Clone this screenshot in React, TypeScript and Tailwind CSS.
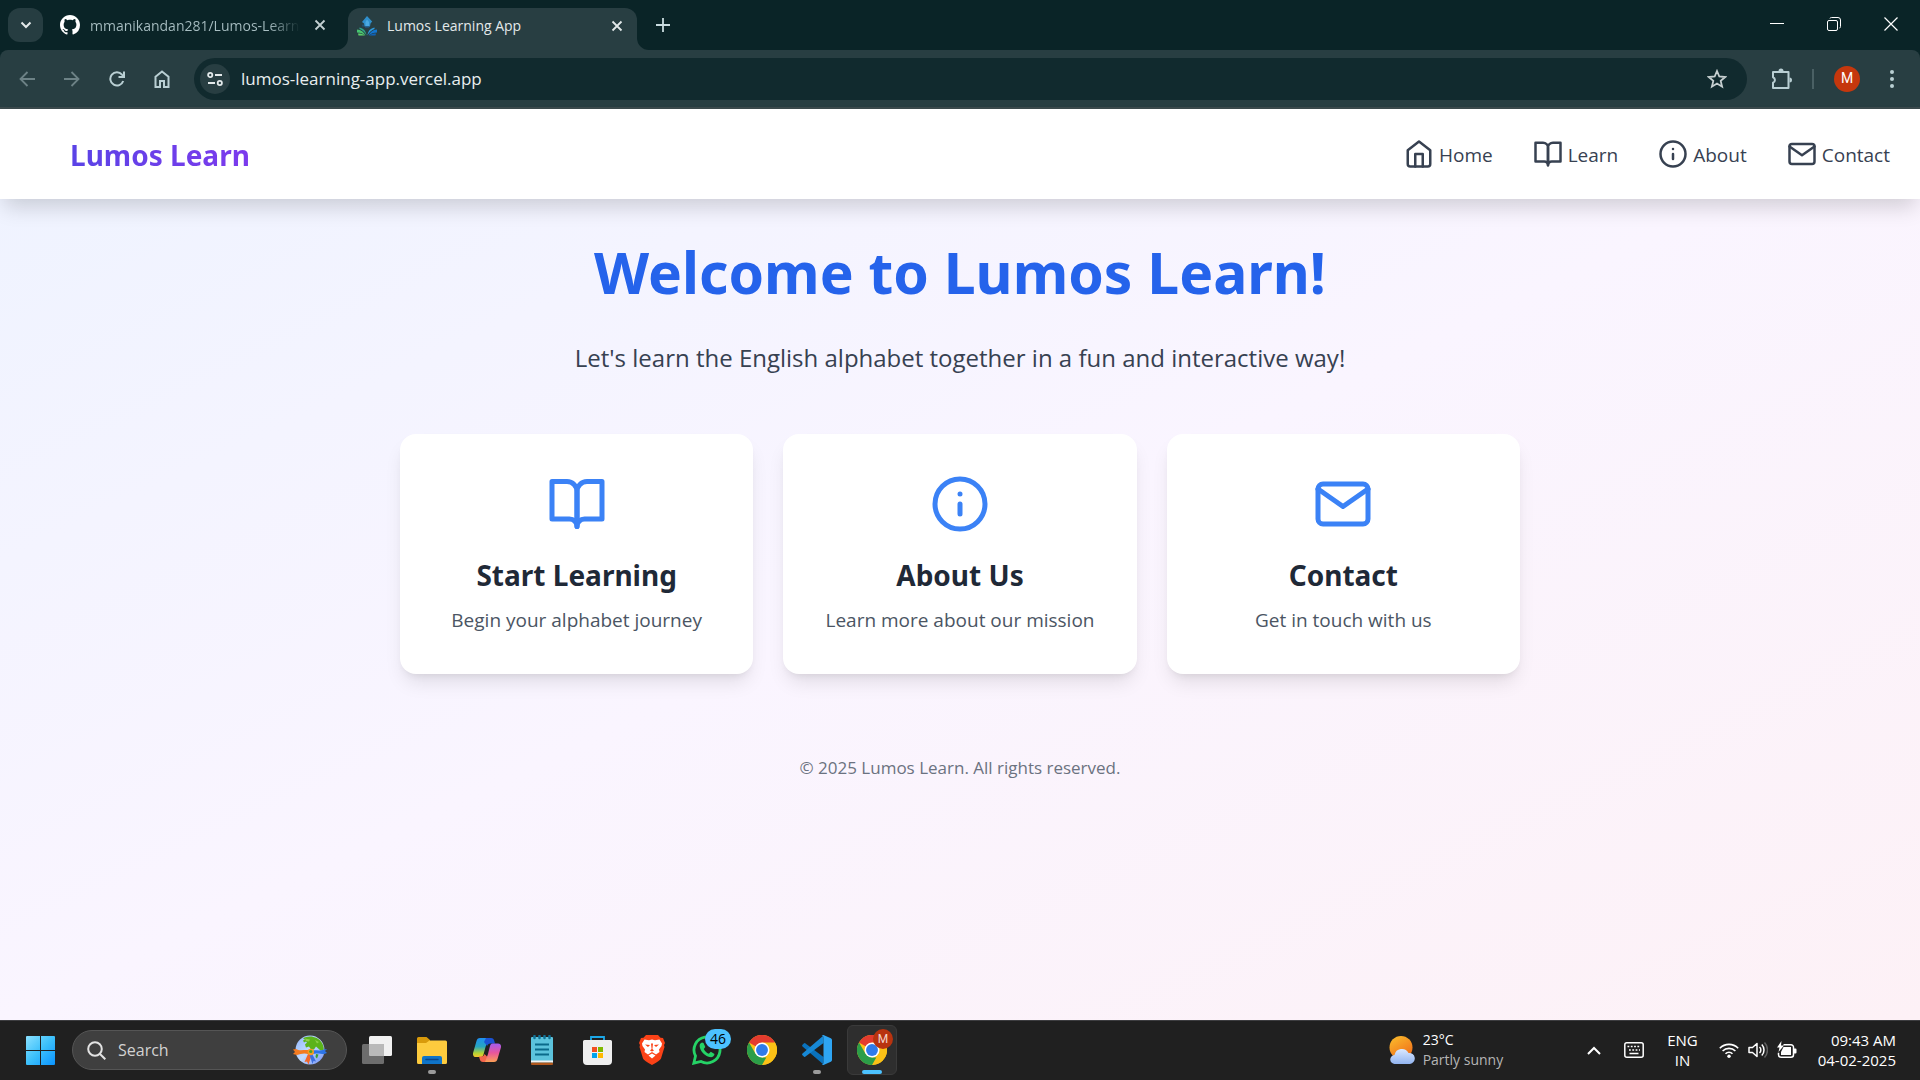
import { FiBookOpen, FiHome, FiInfo, FiMail } from "react-icons/fi";
import type { ReactNode } from "react";
import type { IconType } from "react-icons";

/* ---------- browser frame ---------- */

function CloseGlyph() {
  return (
    <svg viewBox="0 0 12 12" className="size-3" fill="none" stroke="currentColor" strokeWidth="1.8">
      <path d="M1.5 1.5 10.5 10.5M10.5 1.5 1.5 10.5" />
    </svg>
  );
}

function GithubMark() {
  return (
    <svg viewBox="0 0 16 16" className="size-5 shrink-0" fill="#fff">
      <path d="M8 0C3.58 0 0 3.58 0 8c0 3.54 2.29 6.53 5.47 7.59.4.07.55-.17.55-.38 0-.19-.01-.82-.01-1.49-2.01.37-2.53-.49-2.69-.94-.09-.23-.48-.94-.82-1.13-.28-.15-.68-.52-.01-.53.63-.01 1.08.58 1.23.82.72 1.21 1.87.87 2.33.66.07-.52.28-.87.51-1.07-1.78-.2-3.64-.89-3.64-3.95 0-.87.31-1.59.82-2.15-.08-.2-.36-1.02.08-2.12 0 0 .67-.21 2.2.82.64-.18 1.32-.27 2-.27s1.36.09 2 .27c1.53-1.04 2.2-.82 2.2-.82.44 1.1.16 1.92.08 2.12.51.56.82 1.27.82 2.15 0 3.07-1.87 3.75-3.65 3.95.29.25.54.73.54 1.48 0 1.07-.01 1.93-.01 2.2 0 .21.15.46.55.38A8.01 8.01 0 0 0 16 8c0-4.42-3.58-8-8-8" />
    </svg>
  );
}

function LumosMark() {
  return (
    <svg viewBox="0 0 20 20" className="size-5 shrink-0">
      <path d="M10 0 15.200 5.500 13.500 7.500 13 10.500H7.500L7 7.500 5 6z" fill="#2f8fcb" />
      <path d="M10 3.500 12 6v4H8.500V6z" fill="#4aa9e0" />
      <path d="M6 8.500v2M8 11h4" stroke="#1f5f98" strokeWidth="1" />
      <path d="M2.500 11.500c4 .8 6.500 3.500 7 8-1.500-3-4-5.500-7-6.500z" fill="#2fa58a" />
      <path d="M0 13.500c4 .3 7 2.500 8.500 6C6 17.500 3.500 16.500 0 16.500z" fill="#47c46f" />
      <path d="M1 17.500c3 0 5 .5 7 2H1.500z" fill="#5ccd6a" />
      <path d="M17.500 11.500c-4 .8-6.500 3.500-7 8 1.500-3 4-5.500 7-6.500z" fill="#2f9be0" />
      <path d="M20 13.500c-4 .3-7 2.500-8.500 6 2.500-2 5-3 8.500-3z" fill="#1274cf" />
      <path d="M19 17.500c-3 0-5 .5-7 2h6.500z" fill="#0f62b8" />
    </svg>
  );
}

function TabStrip() {
  return (
    <div className="flex h-[50px] items-start bg-[#0a2427] text-[#c3d0d2]">
      <button aria-label="Search tabs" className="mt-2 ml-2 flex h-[34px] w-[35px] items-center justify-center rounded-xl bg-[#263d41] text-[#e3e9ea]">
        <svg viewBox="0 0 12 8" className="h-2 w-3" fill="none" stroke="currentColor" strokeWidth="2">
          <path d="m1.5 1.5 4.500 4.500 4.500-4.500" />
        </svg>
      </button>
      <div className="flex h-[50px] w-[297px] items-center pl-[17px]">
        <GithubMark />
        <span className="ml-[10px] w-[210px] bg-gradient-to-r from-[#a9bfc3] from-85% to-transparent bg-clip-text text-[14px] whitespace-nowrap text-transparent">
          mmanikandan281/Lumos-Learn
        </span>
        <button aria-label="Close tab" className="ml-[14px] text-[#c3d0d2]">
          <CloseGlyph />
        </button>
      </div>
      <div className="relative mt-2 ml-2 flex h-[42px] w-[289px] items-center rounded-t-xl bg-[#283e42] pr-[14px] pb-[7px] pl-[9px] text-[#e3e9ea]">
        <svg viewBox="0 0 12 12" className="absolute bottom-0 -left-3 size-3" fill="#283e42">
          <path d="M12 0v12H0A12 12 0 0 0 12 0" />
        </svg>
        <svg viewBox="0 0 12 12" className="absolute -right-3 bottom-0 size-3" fill="#283e42">
          <path d="M0 0v12h12A12 12 0 0 1 0 0" />
        </svg>
        <LumosMark />
        <span className="ml-[10px] grow text-[14px] whitespace-nowrap">Lumos Learning App</span>
        <button aria-label="Close tab">
          <CloseGlyph />
        </button>
      </div>
      <button aria-label="New tab" className="mt-[18px] ml-[19px]">
        <svg viewBox="0 0 14 14" className="size-[14px]" fill="none" stroke="#c9dcdf" strokeWidth="1.8">
          <path d="M7 0v14M0 7h14" />
        </svg>
      </button>
      <div className="ml-auto flex items-center gap-[43px] pt-[17px] pr-[22px] text-white">
        <button aria-label="Minimize">
          <svg viewBox="0 0 14 14" className="size-[14px]" stroke="currentColor" strokeWidth="1">
            <path d="M0 6.500h14" />
          </svg>
        </button>
        <button aria-label="Restore">
          <svg viewBox="0 0 14 14" className="size-[14px]" fill="none" stroke="currentColor" strokeWidth="1">
            <rect x=".5" y="3.500" width="10" height="10" rx="1.500" />
            <path d="M3 1.500C3 .9 3.500.5 4.500.5H11A2.500 2.500 0 0 1 13.500 3v6.500c0 1-.5 1.500-1 1.500" />
          </svg>
        </button>
        <button aria-label="Close">
          <svg viewBox="0 0 14 14" className="size-[14px]" stroke="currentColor" strokeWidth="1.200">
            <path d="M.5.5 13.500 13.500M13.500.5.5 13.500" />
          </svg>
        </button>
      </div>
    </div>
  );
}

function Toolbar() {
  return (
    <div className="bg-[#0a2427]">
      <div className="flex h-[59px] items-center rounded-t-lg border-b-2 border-[#3c4a4d] bg-[#283e42] pr-[26px] pl-[19px] text-[#b9cfd3]">
        <button aria-label="Back" className="text-[#6d8286]">
          <svg viewBox="0 0 16 16" className="size-4" fill="none" stroke="currentColor" strokeWidth="1.800">
            <path d="M16 8H2M8.500 1 1.500 8l7 7" />
          </svg>
        </button>
        <button aria-label="Forward" className="ml-[29px] text-[#6d8286]">
          <svg viewBox="0 0 16 16" className="size-4" fill="none" stroke="currentColor" strokeWidth="1.800">
            <path d="M0 8h14M7.500 1l7 7-7 7" />
          </svg>
        </button>
        <button aria-label="Reload" className="ml-[29px]">
          <svg viewBox="0 0 16 16" className="size-4" fill="none" stroke="currentColor" strokeWidth="2">
            <path d="M14.200 10A6.600 6.600 0 1 1 13 3.700L15 5.800M15 .5V6H9.500" />
          </svg>
        </button>
        <button aria-label="Home page" className="ml-[29px]">
          <svg viewBox="0 0 16 18" className="h-[18px] w-4" fill="none" stroke="currentColor" strokeWidth="2">
            <path d="M1.500 6.800 8 1.500l6.500 5.300V17H10v-6H6v6H1.500z" />
          </svg>
        </button>
        <div className="ml-6 flex h-[42px] grow items-center rounded-full bg-[#112a2e] pr-5 pl-[6px]">
          <span className="flex size-[30px] shrink-0 items-center justify-center rounded-full bg-[#283e42] text-[#e3e9ea]">
            <svg viewBox="0 0 16 14" className="h-[14px] w-4" fill="none" stroke="currentColor" strokeWidth="1.800">
              <circle cx="3.200" cy="3" r="2.100" />
              <path d="M8 3h7M1 11h7" />
              <circle cx="12.800" cy="11" r="2.100" />
            </svg>
          </span>
          <input
            aria-label="Address"
            defaultValue="lumos-learning-app.vercel.app"
            className="ml-[11px] h-8 grow bg-transparent text-[17px] text-[#e8eeef] outline-none"
          />
          <button aria-label="Bookmark this page" className="text-[#c6cfd0]">
            <svg viewBox="0 0 20 20" className="size-5" fill="none" stroke="currentColor" strokeWidth="1.800">
              <path d="m10 2 2.300 5.500 5.900.5-4.500 3.900 1.400 5.800L10 14.600l-5.100 3.100 1.400-5.800L1.800 8l5.900-.5z" />
            </svg>
          </button>
        </div>
        <button aria-label="Extensions" className="ml-6">
          <svg viewBox="0 0 22 22" className="size-[22px]" fill="none" stroke="currentColor" strokeWidth="2" strokeLinejoin="round">
            <path d="M2 4h15.500v16H2v-5.200a3 3 0 0 0 0-5.600z" />
            <path d="M7.500 3a2.500 2.500 0 0 1 5 0zM18.500 9.500a2.500 2.500 0 0 1 0 5z" fill="currentColor" stroke="none" />
          </svg>
        </button>
        <span className="ml-[19px] h-5 w-[2px] bg-[#4a6064]" />
        <button aria-label="Profile" className="ml-5 flex size-[26px] items-center justify-center rounded-full bg-[#c5370d] font-['Roboto',sans-serif] text-[14px] text-white">
          M
        </button>
        <button aria-label="Menu" className="ml-[30px]">
          <svg viewBox="0 0 4 18" className="h-[18px] w-1" fill="currentColor">
            <circle cx="2" cy="2" r="2" />
            <circle cx="2" cy="9" r="2" />
            <circle cx="2" cy="16" r="2" />
          </svg>
        </button>
      </div>
    </div>
  );
}

/* ---------- site ---------- */

const navItems: { label: string; icon: IconType }[] = [
  { label: "Home", icon: FiHome },
  { label: "Learn", icon: FiBookOpen },
  { label: "About", icon: FiInfo },
  { label: "Contact", icon: FiMail },
];

const cards: { title: string; text: string; icon: IconType }[] = [
  { title: "Start Learning", text: "Begin your alphabet journey", icon: FiBookOpen },
  { title: "About Us", text: "Learn more about our mission", icon: FiInfo },
  { title: "Contact", text: "Get in touch with us", icon: FiMail },
];

function Site() {
  return (
    <div className="flex grow flex-col bg-gradient-to-br from-[#eef3ff] via-[#faf5ff] to-[#fdf1f6]">
      <header className="flex h-[90px] items-center justify-between bg-white pt-[2px] pr-[30px] pl-[70px] shadow-[0_12px_20px_-4px_rgb(0_0_0/0.16)]">
        <a href="#home" className="bg-gradient-to-r from-[#5a43e6] to-[#7c3aed] bg-clip-text font-['Noto_Sans',sans-serif] text-[28px] leading-10 font-bold text-transparent">
          Lumos Learn
        </a>
        <nav className="flex items-center gap-10">
          {navItems.map(({ label, icon: Icon }) => (
            <a key={label} href={"#" + label.toLowerCase()} className="flex items-center gap-[5px] text-[19px] text-[#374151]">
              <Icon className="mb-[2px] size-[30px]" />
              {label}
            </a>
          ))}
        </nav>
      </header>
      <main className="mx-auto w-full max-w-[1120px] pt-[38px] text-center">
        <h1 className="font-['Noto_Sans',sans-serif] text-[57px] leading-[70px] font-bold text-[#2563eb]">Welcome to Lumos Learn!</h1>
        <p className="mt-[33px] text-[24px] leading-[35px] text-[#374151]">
          Let's learn the English alphabet together in a fun and interactive way!
        </p>
        <div className="mt-[59px] grid grid-cols-3 gap-[30px]">
          {cards.map(({ title, text, icon: Icon }) => (
            <a
              key={title}
              href={"#" + title.toLowerCase().replace(" ", "-")}
              className="flex flex-col items-center rounded-2xl bg-white px-10 pt-10 pb-[39px] shadow-[0_12px_19px_-4px_rgb(0_0_0/0.1),0_5px_8px_-5px_rgb(0_0_0/0.1)]"
            >
              <Icon className="size-[60px] text-[#3b82f6]" />
              <h2 className="mt-[21px] font-['Noto_Sans',sans-serif] text-[28px] leading-10 font-bold text-[#1f2937]">{title}</h2>
              <p className="mt-[10px] text-[19px] leading-[30px] text-[#4b5563]">{text}</p>
            </a>
          ))}
        </div>
      </main>
      <footer className="mt-[81px] text-center text-[17px] leading-[25px] text-[#6b7280]">
        © 2025 Lumos Learn. All rights reserved.
      </footer>
    </div>
  );
}

/* ---------- taskbar ---------- */

function ChromeLogo() {
  return (
    <svg viewBox="0 0 48 48" className="size-[30px]">
      <circle cx="24" cy="24" r="24" fill="#fbc116" />
      <path d="M24 24 3.200 12A24 24 0 0 1 44.800 12z" fill="#e33b2e" />
      <path d="M24 12h20.800A24 24 0 0 1 24 48l10.400-18z" fill="#fbc116" />
      <path d="M3.200 12 13.600 30 24 36h6.900L24 48A24 24 0 0 1 3.200 12" fill="#2b9e48" />
      <circle cx="24" cy="24" r="12" fill="#fff" />
      <circle cx="24" cy="24" r="9.500" fill="#2f7bea" />
    </svg>
  );
}

function WindowsLogo() {
  return (
    <svg viewBox="0 0 29 29" className="size-[29px]">
      <defs>
        <linearGradient id="win" x1="0" y1="0" x2="1" y2="1">
          <stop offset="0" stopColor="#8be1ff" />
          <stop offset=".5" stopColor="#3cc0fb" />
          <stop offset="1" stopColor="#0a93ff" />
        </linearGradient>
      </defs>
      <path d="M1 0h13v14H0V1a1 1 0 0 1 1-1M15 0h13a1 1 0 0 1 1 1v13H15zM0 15h14v14H1a1 1 0 0 1-1-1zM15 15h14v13a1 1 0 0 1-1 1H15z" fill="url(#win)" />
    </svg>
  );
}

function Globe() {
  return (
    <svg viewBox="0 0 34 30" className="h-[30px] w-[34px]">
      <defs>
        <linearGradient id="sea" x1="0" y1="0" x2="1" y2="1">
          <stop offset="0" stopColor="#8fb4fb" />
          <stop offset=".5" stopColor="#c3dcff" />
          <stop offset="1" stopColor="#6d8df5" />
        </linearGradient>
      </defs>
      <circle cx="17" cy="15" r="14.500" fill="url(#sea)" />
      <path d="M10 3.500C15 0 25 1 29 8c1.500 3 2 5 1.500 7l-3 .5-4.500-4-2 3h-3l-2-3-3 1-1-3 2-2-1-1-2 1-1-2 2-1z" fill="#5cb31b" />
      <path d="M12 3.500l5 1-1 2-3-.5zM22 5l4 2-2 1.500z" fill="#8fd04a" />
      <path d="M23 19l2.500.5-1.500 4-1.500-1.500z" fill="#3c9c2c" />
      <path d="M0 14.500 3 14c4 2.500 9 0 14 1.500l-1 4c-5-2-8-.5-12 .5L0 19l2-2z" fill="#f47b20" />
      <path d="m34 14-3 .5c-5 2-8 0-13 1l1 4c5-2 8-.5 12-.5l3-1-2-2z" fill="#2b74e8" />
      <path d="m15 19-3.500 8 2.500-.5 1.500 3L19 19z" fill="#f2672a" />
      <path d="m19 18.500 4 8-2.500-.5-1 3L16.500 20z" fill="#3c6fe0" />
      <circle cx="17.800" cy="17" r="3.200" fill="#f79a23" />
      <circle cx="17.800" cy="16.500" r="1.600" fill="#45a52c" />
    </svg>
  );
}

function TaskView() {
  return (
    <svg viewBox="0 0 30 28" className="h-7 w-[30px]">
      <rect x="7" y="0" width="23" height="20" rx="1.500" fill="#f1f1f1" />
      <rect x="0" y="8" width="22" height="20" rx="1.500" fill="#6d6d6d" />
      <path d="M7 8h14a1 1 0 0 1 1 1v11H8a1 1 0 0 1-1-1z" fill="#b9b9b9" />
    </svg>
  );
}

function Explorer() {
  return (
    <svg viewBox="0 0 30 27" className="h-[27px] w-[30px]">
      <path d="M0 1.500A1.500 1.500 0 0 1 1.500 0h8L13 3v5H0z" fill="#d99a0b" />
      <path d="M0 6h9l3.500-2.500H28.500A1.500 1.500 0 0 1 30 5v20.500a1.500 1.500 0 0 1-1.500 1.500h-27A1.500 1.500 0 0 1 0 25.500z" fill="#fdcb3e" />
      <path d="M5 27v-6a2 2 0 0 1 2-2h16a2 2 0 0 1 2 2v6z" fill="#0f74c8" />
      <path d="M9 22.500h12" stroke="#08458a" strokeWidth="1.500" strokeLinecap="round" />
    </svg>
  );
}

function Copilot() {
  return (
    <svg viewBox="0 0 28 26" className="h-[26px] w-7">
      <defs>
        <linearGradient id="copL" x1="0" y1="0" x2="0" y2="1">
          <stop offset="0" stopColor="#1f8ff0" />
          <stop offset=".45" stopColor="#27a5c0" />
          <stop offset=".8" stopColor="#b5d334" />
          <stop offset="1" stopColor="#f6c52d" />
        </linearGradient>
        <linearGradient id="copR" x1="0" y1="0" x2="0" y2="1">
          <stop offset="0" stopColor="#a35cf0" />
          <stop offset=".5" stopColor="#e8559c" />
          <stop offset="1" stopColor="#fb9f55" />
        </linearGradient>
      </defs>
      <path d="M7 1h9l-3.500 9-2 7.500C10 19 9.500 20 8 20H3C.5 20-.5 18 .2 15.500L3.500 4C4 2 5 1 7 1" fill="url(#copL)" />
      <path d="M13 1h5c2 0 2.800 1.300 3.300 3l.7 2.500h-4.500c-2 0-2.800 1-3.300 2.500L11 5z" fill="#1b52d4" />
      <path d="M15 25h-5c-2 0-2.800-1.300-3.300-3L6 19.500h2.500c2 0 2.500-1 3-2.500l3 3z" fill="#f2654c" />
      <path d="M21 25h-9l3-8 2-8c.5-1.500 1-2.500 2.500-2.500H25c2.500 0 3.500 2 2.800 4.500L24.500 22c-.5 2-1.500 3-3.500 3" fill="url(#copR)" />
    </svg>
  );
}

function Notepad() {
  return (
    <svg viewBox="0 0 22 30" className="h-[30px] w-[22px]">
      <rect x="0" y="2" width="22" height="26" rx="1" fill="#5cc3dc" />
      <rect x="0" y="25.500" width="22" height="2" fill="#f4f4f4" />
      <rect x="0" y="27.500" width="22" height="2.500" rx="1" fill="#b0571c" />
      <path d="M3.500 1v2M8.500 1v2M13.500 1v2M18.500 1v2" stroke="#107296" strokeWidth="2.500" strokeLinecap="round" />
      <path d="M4 9.500h14M4 14.500h14M4 19.500h14" stroke="#0a6a8a" strokeWidth="1.800" />
    </svg>
  );
}

function Store() {
  return (
    <svg viewBox="0 0 29 29" className="size-[29px]">
      <path d="M8 6V1h13v5" fill="none" stroke="#1ba8e8" strokeWidth="1.800" />
      <path d="M0 5.500A1.500 1.500 0 0 1 1.500 4h26A1.500 1.500 0 0 1 29 5.500V25a4 4 0 0 1-4 4H4a4 4 0 0 1-4-4z" fill="#efefef" />
      <path d="M9 11h5v5H9z" fill="#f25022" />
      <path d="M15 11h5v5h-5z" fill="#7fba00" />
      <path d="M9 17h5v5H9z" fill="#00a4ef" />
      <path d="M15 17h5v5h-5z" fill="#ffb900" />
    </svg>
  );
}

function Brave() {
  return (
    <svg viewBox="0 0 26 30" className="h-[30px] w-[26px]">
      <path d="m7 0-2.500 2.800L2 3 0 8l1 2-.5 2L4 23.500Q5 25.500 13 30q8-4.500 9-6.500L25.500 12l-.5-2 1-2-2-5-2.500-.2L19 0z" fill="#fb4217" />
      <path d="m5.500 4.500 4.500.8 3-.8 3 .8 4.500-.8L23 8.500l-.5 2.500-2.500 3.500.5 2.500-3.500 2.500L13 17l-4 2.500L5.500 17l.5-2.500L3.500 11 3 8.500z" fill="#fff" />
      <path d="m9.500 20.500 3.500-2 3.500 2-3.500 3z" fill="#fff" />
      <path d="M6 9.500l5 .5-2 2zM20 9.500l-5 .5 2 2zM12 8.500h2l-.6 5.500 1.600 1.500-2 1-2-1 1.600-1.500z" fill="#fb4217" />
    </svg>
  );
}

function Whatsapp() {
  return (
    <svg viewBox="0 0 30 30" className="size-[30px]">
      <path d="M1.800 28.200 3.500 21A13 13 0 1 1 9 26.500z" fill="none" stroke="#25d366" strokeWidth="2.800" />
      <path d="M10 7.500c-2 .5-3 2.500-2 5.500 1.500 4.500 5 7.800 9.500 9 2.800.6 4.800-.8 5-3l-3.700-2.300-2 2c-2.300-.8-4-2.500-5-4.700l1.500-2L11.500 8z" fill="#25d366" />
    </svg>
  );
}

function VsCode() {
  return (
    <svg viewBox="0 0 30 30" className="size-[30px]">
      <path d="M3.200 8.300 21.500 22v7.500L.5 11.500q-.8-1 0-1.800l1.300-1.300q.7-.6 1.400-.1" fill="#0a72bd" />
      <path d="M3.200 21.700 21.500 8V.5L.5 18.500q-.8 1 0 1.800l1.300 1.300q.7.600 1.400.1" fill="#1789d6" />
      <path d="m21.500 0 7.300 3.200a2 2 0 0 1 1.200 1.800v20a2 2 0 0 1-1.200 1.800L21.500 30q-1.500 0-1.800-1 1.800.8 1.800-1.500V2.500Q21.500.2 19.700 1q.3-1 1.800-1" fill="#2ea5f3" />
    </svg>
  );
}

function TaskButton({ label, active, running, children }: { label: string; active?: boolean; running?: boolean; children: ReactNode }) {
  return (
    <button
      aria-label={label}
      className={
        active
          ? "relative flex h-[50px] w-[50px] items-center justify-center rounded-md border border-[#3a3a3a] bg-[#2e2e2e]"
          : "relative flex h-[50px] w-[50px] items-center justify-center"
      }
    >
      {children}
      {running && <span className="absolute bottom-[1px] left-[21px] h-1 w-2 rounded-full bg-[#9b9b9b]" />}
      {active && <span className="absolute bottom-0 left-[14px] h-1 w-5 rounded-full bg-[#4cc2ff]" />}
    </button>
  );
}

function Taskbar() {
  return (
    <div className="flex h-[60px] items-center border-t border-[#3d3d40] bg-[#202020] pr-6 pb-[1px] pl-[26px] text-[14px] leading-5 text-white">
      <button aria-label="Start">
        <WindowsLogo />
      </button>
      <label className="ml-[17px] flex h-10 w-[275px] items-center rounded-full border border-[#555] bg-[#3f3f3f] pr-[19px] pl-[14px]">
        <svg viewBox="0 0 19 19" className="size-[19px] shrink-0" fill="none" stroke="#e3e3e3" strokeWidth="2">
          <circle cx="8" cy="8" r="6.800" />
          <path d="m13 13 5.300 5.300" />
        </svg>
        <input aria-label="Search" placeholder="Search" className="ml-3 w-0 grow bg-transparent text-[16px] outline-none placeholder:text-[#d2d2d2]" />
        <Globe />
      </label>
      <div className="ml-[5px] flex items-center gap-[5px]">
        <TaskButton label="Task view"><TaskView /></TaskButton>
        <TaskButton label="File Explorer" running><Explorer /></TaskButton>
        <TaskButton label="Copilot"><Copilot /></TaskButton>
        <TaskButton label="Notepad"><Notepad /></TaskButton>
        <TaskButton label="Store"><Store /></TaskButton>
        <TaskButton label="Brave"><Brave /></TaskButton>
        <TaskButton label="WhatsApp">
          <Whatsapp />
          <span className="absolute top-1 left-[23px] flex h-5 w-[26px] items-center justify-center rounded-full bg-[#4cc2ff] text-[14px] text-black">46</span>
        </TaskButton>
        <TaskButton label="Chrome"><ChromeLogo /></TaskButton>
        <TaskButton label="Visual Studio Code" running><VsCode /></TaskButton>
        <TaskButton label="Chrome, Lumos Learning App" active>
          <ChromeLogo />
          <span className="absolute top-[3px] right-[3px] flex size-5 items-center justify-center rounded-full bg-[#b8330f] font-['Roboto',sans-serif] text-[12px] text-[#f3d5c8]">M</span>
        </TaskButton>
      </div>
      <button className="ml-auto flex items-center gap-2 text-left">
        <svg viewBox="0 0 26 28" className="h-7 w-[26px]">
          <defs>
            <linearGradient id="sun" x1="0" y1="0" x2=".6" y2="1">
              <stop offset="0" stopColor="#fbc02d" />
              <stop offset="1" stopColor="#f0701a" />
            </linearGradient>
            <linearGradient id="cloud" x1="0" y1="0" x2="0" y2="1">
              <stop offset="0" stopColor="#dbe9ff" />
              <stop offset="1" stopColor="#92b4f0" />
            </linearGradient>
          </defs>
          <circle cx="12" cy="11.500" r="11.500" fill="url(#sun)" />
          <path d="M6 28a4.500 4.500 0 0 1-.5-9A7.500 7.500 0 0 1 19.500 17 5.500 5.500 0 0 1 21 28z" fill="url(#cloud)" />
        </svg>
        <span>
          23°C
          <br />
          <span className="text-[#b5b5b5]">Partly sunny</span>
        </span>
      </button>
      <button aria-label="Show hidden icons" className="ml-[84px]">
        <svg viewBox="0 0 14 9" className="h-[9px] w-[14px]" fill="none" stroke="currentColor" strokeWidth="2">
          <path d="m1 8 6-6 6 6" />
        </svg>
      </button>
      <button aria-label="Touch keyboard" className="ml-[23px]">
        <svg viewBox="0 0 20 16" className="h-4 w-5" fill="none" stroke="currentColor" strokeWidth="1.500">
          <rect x=".8" y=".8" width="18.400" height="14.400" rx="2" />
          <path d="M3.500 4.500h13M5 8h11" strokeDasharray="1.800 1.500" />
          <path d="M5.500 11.500h9" />
        </svg>
      </button>
      <button className="ml-[23px] text-center text-[15px]">
        ENG
        <br />
        IN
      </button>
      <button aria-label="Network, volume and battery" className="ml-[21px] flex items-center gap-[9px]">
        <svg viewBox="0 0 20 16" className="h-4 w-5" fill="none" stroke="currentColor" strokeWidth="1.600">
          <path d="M.8 6.200a13 13 0 0 1 18.400 0M3.600 9a9 9 0 0 1 12.800 0M6.500 11.800a5 5 0 0 1 7 0" />
          <circle cx="10" cy="14.200" r="1.700" fill="currentColor" stroke="none" />
        </svg>
        <svg viewBox="0 0 20 18" className="h-[18px] w-5" fill="none" stroke="currentColor" strokeWidth="1.500">
          <path d="M1 6.500h3.500L9 2.500v13l-4.500-4H1z" strokeLinejoin="round" />
          <path d="M11.500 6a4 4 0 0 1 0 6M13.800 3.500a8 8 0 0 1 0 11" />
          <path d="M16.500 1.500a11 11 0 0 1 0 15" stroke="#5f5f5f" />
        </svg>
        <svg viewBox="0 0 20 18" className="h-[18px] w-5">
          <path d="M6.500 3.800H14a2.500 2.500 0 0 1 2.500 2.500v7.400a2.500 2.500 0 0 1-2.500 2.500H4a2.500 2.500 0 0 1-2.500-2.500v-2" fill="none" stroke="currentColor" strokeWidth="1.500" />
          <path d="M6.500 6H14v8H4v-3zM17 7.500h1.500q1 0 1 1v3q0 1-1 1H17zM4.500 0 0 6.500h2.500L1.500 11 7 4.500H4z" fill="currentColor" />
        </svg>
      </button>
      <button className="ml-[21px] text-right text-[15px]">
        09:43 AM
        <br />
        04-02-2025
      </button>
    </div>
  );
}

export default function App() {
  return (
    <div className="flex min-h-screen flex-col font-['Open_Sans','Noto_Sans',sans-serif]">
      <TabStrip />
      <Toolbar />
      <Site />
      <Taskbar />
    </div>
  );
}
